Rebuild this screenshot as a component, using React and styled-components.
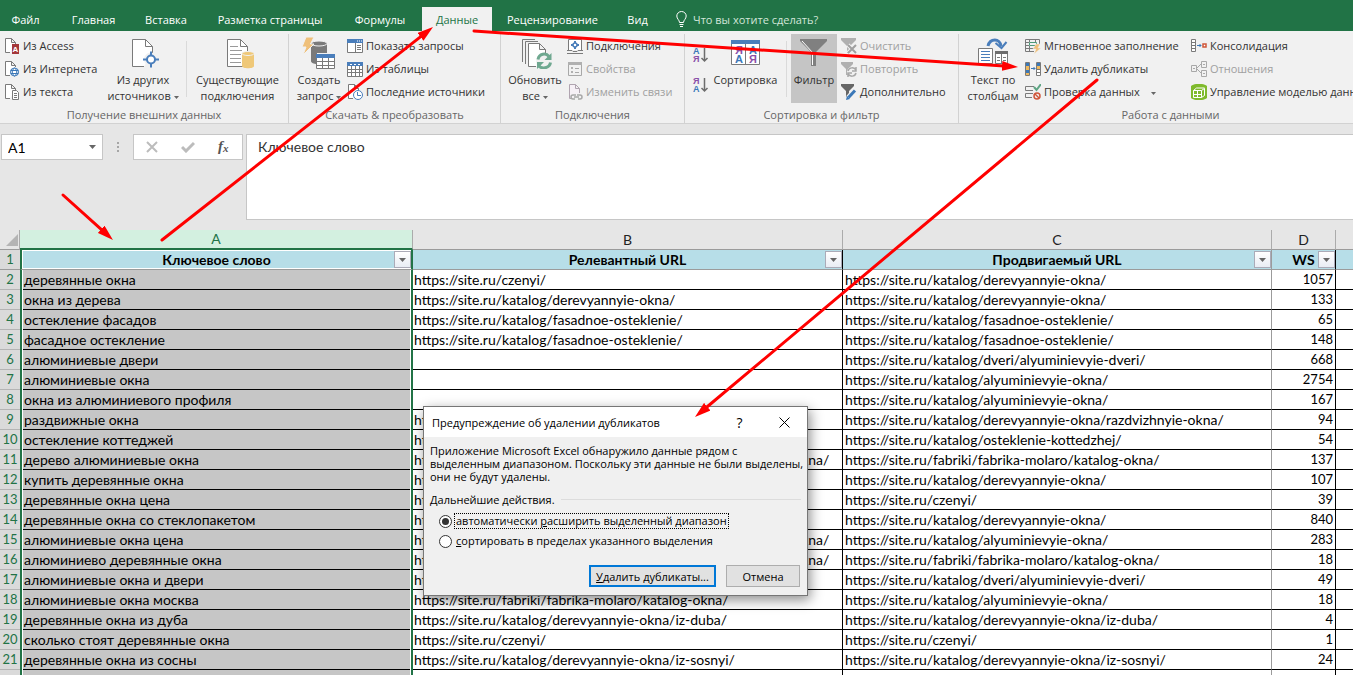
import React, { useState } from "react";
import styled, { createGlobalStyle } from "styled-components";

const GlobalStyle = createGlobalStyle`
    * {
        box-sizing: border-box;
    }

    body {
        margin: 0;
        background: #e6e6e6;
        font-family: "Open Sans", "Noto Sans", sans-serif;
        font-size: 11px;
        color: #333;
    }

    button, input, textarea {
        font: inherit;
        color: inherit;
        border-radius: 0;
        margin: 0;
        padding: 0;
    }
`;

const tabs = [
    { label: "Файл", width: 51 },
    { label: "Главная", width: 73 },
    { label: "Вставка", width: 72 },
    { label: "Разметка страницы", width: 136 },
    { label: "Формулы", width: 84 },
    { label: "Данные", width: 70 },
    { label: "Рецензирование", width: 121 },
    { label: "Вид", width: 49 },
];

const base = "https://site.ru/";
const derev = base + "katalog/derevyannyie-okna/";
const alum = base + "katalog/alyuminievyie-okna/";
const fasad = base + "katalog/fasadnoe-osteklenie/";
const dveri = base + "katalog/dveri/alyuminievyie-dveri/";
const molaro = base + "fabriki/fabrika-molaro/katalog-okna/";
const derevAlum = derev + "derevo-alyuminiev-okna/";

const rows = [
    ["деревянные окна", base + "czenyi/", derev, 1057],
    ["окна из дерева", derev, derev, 133],
    ["остекление фасадов", fasad, fasad, 65],
    ["фасадное остекление", fasad, fasad, 148],
    ["алюминиевые двери", "", dveri, 668],
    ["алюминиевые окна", "", alum, 2754],
    ["окна из алюминиевого профиля", "", alum, 167],
    ["раздвижные окна", derev, derev + "razdvizhnyie-okna/", 94],
    ["остекление коттеджей", derev, base + "katalog/osteklenie-kottedzhej/", 54],
    ["дерево алюминиевые окна", derevAlum, molaro, 137],
    ["купить деревянные окна", derev, derev, 107],
    ["деревянные окна цена", base + "czenyi/", base + "czenyi/", 39],
    ["деревянные окна со стеклопакетом", derev, derev, 840],
    ["алюминиевые окна цена", derevAlum, alum, 283],
    ["алюминиево деревянные окна", derevAlum, molaro, 18],
    ["алюминиевые окна и двери", alum, dveri, 49],
    ["алюминиевые окна москва", molaro, alum, 18],
    ["деревянные окна из дуба", derev + "iz-duba/", derev + "iz-duba/", 4],
    ["сколько стоят деревянные окна", base + "czenyi/", base + "czenyi/", 1],
    ["деревянные окна из сосны", derev + "iz-sosnyi/", derev + "iz-sosnyi/", 24],
    ["", "", "", ""],
];

/* ---------- layout ---------- */

const Window = styled.div`
    position: relative;
    display: flex;
    flex-direction: column;
    height: 100vh;
    overflow: hidden;
`;

const TabBar = styled.nav`
    display: flex;
    align-items: flex-end;
    flex: none;
    height: 31px;
    background: #217346;
    color: #fff;
`;

const Tab = styled.button`
    flex: none;
    width: ${(props) => props.$width}px;
    height: 24px;
    border: 0;
    white-space: nowrap;
    background: ${(props) => (props.$active ? "#f1f1f1" : "transparent")};
    color: ${(props) => (props.$active ? "#217346" : "#fff")};
    text-align: center;

    &:first-child {
        margin-right: 6px;
    }
`;

const TellMe = styled.button`
    display: flex;
    align-items: center;
    gap: 6px;
    height: 24px;
    padding-left: 14px;
    border: 0;
    background: transparent;
    color: #d3e6da;
    white-space: nowrap;
`;

const Ribbon = styled.div`
    display: flex;
    flex: none;
    padding-top: 3px;
    background: #f1f1f1;
    border-bottom: 1px solid #d2d2d2;
    overflow: hidden;
`;

const Group = styled.section`
    position: relative;
    flex: none;
    width: ${(props) => props.$width}px;
    padding-left: ${(props) => props.$pad || 0}px;
    border-right: 1px solid #d2d2d2;
`;

const GroupBody = styled.div`
    display: flex;
    height: 70px;
`;

const GroupLabel = styled.div`
    height: 19px;
    line-height: 21px;
    margin-left: -${(props) => props.$pad || 0}px;
    text-align: center;
    color: #666;
`;

const SmallColumn = styled.div`
    flex: none;
    width: ${(props) => props.$width}px;
    padding-left: ${(props) => props.$pad || 0}px;
`;

const SmallButton = styled.button`
    display: flex;
    align-items: center;
    gap: 3px;
    height: 23px;
    border: 0;
    background: transparent;
    white-space: nowrap;
    color: ${(props) => (props.disabled ? "#a0a0a0" : "inherit")};

    svg {
        flex: none;
    }
`;

const BigButton = styled.button`
    display: flex;
    flex: none;
    flex-direction: column;
    align-items: center;
    width: ${(props) => props.$width}px;
    height: 69px;
    padding-top: 3px;
    border: 0;
    line-height: 16px;
    white-space: nowrap;
    background: ${(props) => (props.$active ? "#c5c5c5" : "transparent")};

    svg.big {
        flex: none;
        margin-bottom: 3px;
    }
`;

const Divider = styled.div`
    flex: none;
    width: 1px;
    height: 56px;
    margin: 7px ${(props) => props.$gap || 0}px 0;
    background: #dadada;
`;

const SortColumn = styled.div`
    display: flex;
    flex: none;
    flex-direction: column;
    gap: 12px;
    width: 20px;
    padding: 11px 0 0 4px;
`;

const IconButton = styled.button`
    display: flex;
    align-items: center;
    justify-content: center;
    border: 0;
    background: transparent;
`;

const FormulaArea = styled.div`
    display: flex;
    flex: none;
    align-items: flex-start;
    padding: 10px 0 10px 1px;
    font-family: Lato, sans-serif;
    font-size: 14px;
`;

const NameBox = styled.div`
    display: flex;
    width: 102px;
    height: 26px;
    border: 1px solid #c6c6c6;
    background: #fff;
    color: #000;

    input {
        flex: 1;
        min-width: 0;
        padding-left: 6px;
        border: 0;
        outline: 0;
        background: transparent;
    }

    button {
        width: 20px;
    }
`;

const Grip = styled.div`
    display: flex;
    flex-direction: column;
    align-items: center;
    gap: 2px;
    width: 30px;
    padding-top: 8px;

    i {
        width: 2px;
        height: 2px;
        background: #a6a6a6;
    }
`;

const FormulaButtons = styled.div`
    display: flex;
    width: 110px;
    height: 26px;
    margin-right: 3px;
    border: 1px solid #c6c6c6;
    background: #fff;

    button {
        flex: 1;
    }
`;

const FormulaInput = styled.textarea`
    flex: 1;
    min-width: 0;
    height: 86px;
    padding: 2px 11px;
    border: 1px solid #c6c6c6;
    border-right: 0;
    outline: 0;
    resize: none;
    line-height: 20px;
    background: #fff;
`;

const SheetArea = styled.div`
    flex: 1;
    min-height: 0;
    overflow: hidden;
    background: #fff;
`;

const Sheet = styled.table`
    width: 100%;
    table-layout: fixed;
    border-spacing: 0;
    font-family: Lato, sans-serif;
    font-size: 14px;
    color: #000;

    td, th {
        height: 20px;
        padding: 0;
        line-height: 19px;
        white-space: nowrap;
        overflow: hidden;
    }

    thead th {
        line-height: 18px;
    }
`;

const ColumnHead = styled.th`
    font-weight: 400;
    background: ${(props) => (props.$selected ? "#d3f0e0" : "#e6e6e6")};
    color: ${(props) => (props.$selected ? "#217346" : "#222")};
    border-right: 1px solid #ababab;
    border-bottom: ${(props) => (props.$selected ? "2px solid #217346" : "1px solid #9b9b9b")};

    &:last-child {
        border-right: 0;
    }
`;

const Corner = styled.th`
    background: #e6e6e6;
    border-right: 1px solid #ababab;
    border-bottom: 1px solid #9b9b9b;

    svg {
        display: block;
        margin-left: 6px;
    }
`;

const RowHead = styled.th`
    font-weight: 400;
    font-size: 13px;
    text-align: center;
    color: #217346;
    background: #dadada;
    border-bottom: 1px solid ${(props) => (props.$first ? "#9b9b9b" : "#b4b4b4")};
`;

const lineColor = { left: "#000", center: "#9b9b9b", right: "#000" };

const Cell = styled.td`
    && {
        padding: 0 2px 0 ${(props) => (props.$tight ? 1 : 2)}px;
    }

    font-size: ${(props) => (props.$number ? 13 : 14)}px;
    text-align: ${(props) => (props.$number ? "right" : "left")};
    border-bottom: 1px solid #000;
    border-right: 1px solid ${(props) => lineColor[props.$line || "left"]};

    &:last-child {
        border-right: 0;
    }
`;

const SelectedCell = styled.td`
    background: #fff;
    border-left: 2px solid #217346;
    border-right: 2px solid #217346;

    div {
        height: 20px;
        margin: 0 1px;
        padding-left: 1px;
        background: #c6c6c6;
        border-bottom: 1px solid #000;
    }
`;

const TitleCell = styled.th`
    position: relative;
    font-weight: 700;
    background: #b7dee8;
    border-bottom: 1px solid #9b9b9b;
    border-left: ${(props) => (props.$selected ? "2px solid #217346" : "0")};
    border-right: ${(props) =>
        props.$selected ? "2px solid #217346" : `1px solid ${lineColor[props.$line || "left"]}`};
    box-shadow: ${(props) => (props.$selected ? "inset 0 0 0 1px #fff" : "none")};

    &:last-child {
        border-right: 0;
    }
`;

const FilterButton = styled.button`
    position: absolute;
    right: 0;
    bottom: 1px;
    display: flex;
    align-items: center;
    justify-content: center;
    width: 17px;
    height: 17px;
    border: 1px solid #ababb8;
    background: linear-gradient(#fff, #e9edf4);
`;

/* ---------- dialog ---------- */

const Dialog = styled.div`
    position: absolute;
    left: 423px;
    top: 406px;
    width: 385px;
    height: 190px;
    border: 1px solid #767676;
    background: #f0f0f0;
    color: #000;
    font-size: 11px;
    box-shadow: 2px 4px 12px rgba(0, 0, 0, 0.45);
`;

const DialogTitle = styled.div`
    display: flex;
    align-items: center;
    height: 30px;
    padding-left: 8px;
    background: #fff;

    h1 {
        flex: 1;
        margin: 0;
        font-size: 11px;
        font-weight: 400;
        white-space: nowrap;
    }

    button {
        width: 45px;
        height: 28px;
        font-size: 14px;
    }
`;

const DialogBody = styled.div`
    padding: 7px 6px 0;

    p {
        margin: 0;
        line-height: 13px;
        white-space: nowrap;
    }
`;

const Options = styled.fieldset`
    margin: 0;
    padding: 0;
    border: 0;
`;

const OptionsTitle = styled.div`
    display: flex;
    align-items: center;
    gap: 6px;
    height: 23px;
    margin-top: 5px;

    &::after {
        content: "";
        flex: 1;
        height: 1px;
        background: #dcdcdc;
    }
`;

const Option = styled.label`
    display: flex;
    align-items: center;
    height: 20px;
    padding-left: 9px;
    gap: 2px;
    white-space: nowrap;

    input {
        appearance: none;
        display: grid;
        place-items: center;
        width: 13px;
        height: 13px;
        border: 1px solid #333;
        border-radius: 50%;
        background: #fff;
    }

    input:checked::before {
        content: "";
        width: 7px;
        height: 7px;
        border-radius: 50%;
        background: #333;
    }

    span {
        padding: 0 1px;
        line-height: 14px;
        border: 1px dotted ${(props) => (props.$focused ? "#000" : "transparent")};
    }
`;

const DialogButtons = styled.div`
    display: flex;
    justify-content: flex-end;
    gap: 10px;
    padding: 14px 1px 0 0;
`;

const DialogButton = styled.button`
    width: ${(props) => (props.$primary ? 127 : 74)}px;
    height: 22px;
    border: ${(props) => (props.$primary ? "2px solid #0078d7" : "1px solid #adadad")};
    background: #e1e1e1;
    white-space: nowrap;
`;

const Arrows = styled.svg`
    position: absolute;
    left: 0;
    top: 0;
    pointer-events: none;
`;

/* ---------- icons ---------- */

const Small = ({ children }) => (
    <svg width="16" height="16" viewBox="0 0 16 16" fill="none" stroke="#7a7a7a">
        {children}
    </svg>
);

const Big = ({ children }) => (
    <svg className="big" width="34" height="32" viewBox="0 0 34 32" fill="none" stroke="#7a7a7a">
        {children}
    </svg>
);

const CaretShape = styled.svg`
    vertical-align: middle;
`;

const Caret = ({ small }) => (
    <CaretShape width={small ? 5 : 7} height={small ? 3 : 4} viewBox="0 0 7 4" fill="#666">
        <path d="M0 0h7L3.500 4z" />
    </CaretShape>
);

const Glyph = ({ x, y, size = 9, color, children }) => (
    <text
        x={x}
        y={y}
        fontSize={size}
        fontWeight="700"
        fill={color}
        stroke="none"
        fontFamily="Liberation Sans, sans-serif"
    >
        {children}
    </text>
);

const SmallPage = () => <path d="M6 14.500H1.500V.5h6l4 4V6M7.500.5v4h4" fill="#fff" />;

const AccessIcon = () => (
    <Small>
        <SmallPage />
        <path d="M8 6h7v10H8z" fill="#a4373a" stroke="none" />
        <Glyph x="8.500" y="14" size="8" color="#fff">A</Glyph>
    </Small>
);

const WebIcon = () => (
    <Small>
        <SmallPage />
        <circle cx="10.500" cy="11" r="4" fill="#fff" stroke="#3b78b8" />
        <path d="M6.500 9.500h8M6.500 12.500h8M10.500 7c-3 2-3 6 0 8M10.500 7c3 2 3 6 0 8" stroke="#3b78b8" />
    </Small>
);

const TextIcon = () => (
    <Small>
        <SmallPage />
        <path d="M8.500 6.500h4l2 2v7h-6z" fill="#fff" />
        <path d="M10 9.500h3M10 11.500h3M10 13.500h3" />
    </Small>
);

const OtherSourcesIcon = () => (
    <Big>
        <path d="M26.500 16V9.500l-7-7h-13v27H18M19.500 2.500v7h7" fill="#fff" />
        <circle cx="25" cy="22.500" r="5.500" fill="#f1f1f1" stroke="#f1f1f1" strokeWidth="3" />
        <circle cx="25" cy="22.500" r="4" fill="#fff" stroke="#4a7ebb" strokeWidth="2" />
        <path d="M25 14.500v4M25 26.500v4M17 22.500h4M29 22.500h4" stroke="#4a7ebb" strokeWidth="2" />
    </Big>
);

const ConnectionsIcon = () => (
    <Big>
        <path d="M6.500 2.500h13l7 7v20h-20z" fill="#fff" />
        <path d="M19.500 2.500v7h7" />
        <path d="M9 9.500h8M9 13.500h12M9 17.500h11M9 21.500h11M9 25.500h11" stroke="#9a9a9a" />
        <path d="M21 16v13c0 3 12 3 12 0V16z" fill="#efc878" stroke="none" />
        <ellipse cx="27" cy="16.500" rx="6" ry="2" fill="#efc878" stroke="#f1f1f1" />
    </Big>
);

const QueryIcon = () => (
    <Big>
        <path d="M9 7v17c0 2 3 3 6 3V16h10V7z" fill="#7a7a7a" stroke="none" />
        <ellipse cx="17" cy="6.500" rx="8" ry="2.500" fill="#7a7a7a" stroke="#f1f1f1" />
        <path d="M4 0h8L8.500 7H12L1 18l3-8H0z" fill="#efc07a" stroke="#f1f1f1" />
        <path d="M14.500 17.500h18v14h-18z" fill="#fff" />
        <path d="M14 17h19v4H14z" fill="#4a7ebb" stroke="none" />
        <path d="M14 24.500h19M14 28.500h19M20.500 21v11M26.500 21v11" />
    </Big>
);

const ShowQueriesIcon = () => (
    <Small>
        <path d="M.5 1.500h15v13H.5z" fill="#fff" />
        <path d="M0 1h16v4H0z" fill="#4a7ebb" stroke="none" />
        <path d="M8.500 5v9M10 7.500h4M10 9.500h4M10 11.500h4" />
        <path d="M10 3h1M12 3h1M14 3h1" stroke="#fff" />
    </Small>
);

const FromTableIcon = () => (
    <Small>
        <path d="M.5 1.500h15v14H.5z" fill="#fff" />
        <path d="M0 8.500h16M0 11.500h16M4.500 4v11M8.500 4v11M12.500 4v11" />
        <path d="M0 1h16v4H0z" fill="#4a7ebb" stroke="none" />
        <path d="M3 3.500h2M7 3.500h2M11 3.500h2" stroke="#fff" />
    </Small>
);

const RecentIcon = () => (
    <Small>
        <SmallPage />
        <circle cx="11" cy="11" r="4.500" fill="#fff" stroke="#4a7ebb" />
        <path d="M10.500 8v3.500H14" stroke="#4a7ebb" />
    </Small>
);

const RefreshIcon = () => (
    <Big>
        <path d="M4.500 25V2.500H17M7.500 27V4.500H20" />
        <path d="M18 29.500h-7.500v-23h11l6 6V17M21.500 6.500v6h6" fill="#fff" />
        <circle cx="26" cy="24.500" r="8" fill="#f1f1f1" stroke="none" />
        <path d="M20 22.500c1-6 8-7 11-3M32.500 25.500c-1 6-9 7-12 3" stroke="#6fa890" strokeWidth="3" />
        <path d="M33.500 16v7h-7zM19 32v-7h7z" fill="#6fa890" stroke="none" />
    </Big>
);

const LinksIcon = () => (
    <Small>
        <path d="M1.500 12V1.500h13V12" fill="#fff" />
        <path d="M0 12.500h5l1 1h4l1-1h5M0 15.500h16" />
        <path d="M8 3v2M8 9v2M4 7h2M10 7h2" stroke="#4a7ebb" strokeWidth="2" />
        <circle cx="8" cy="7" r="2" fill="#fff" stroke="#4a7ebb" strokeWidth="1.500" />
    </Small>
);

const PropertiesIcon = () => (
    <Small>
        <path d="M1.500 1.500h13v13h-13z" stroke="#a8a8a8" />
        <path d="M1 1h14v3H1zM4 6h2v2H4zM4 10h2v2H4z" fill="#b0b0b0" stroke="none" />
        <path d="M8 7.500h4M8 11.500h4" stroke="#a8a8a8" />
    </Small>
);

const EditLinksIcon = () => (
    <Small>
        <path d="M5 14.500H2.500V.5h6l4 4V9M8.500.5v4h4" stroke="#b0a4b0" fill="#f6f0f6" />
        <path d="M9 11H6a2 2 0 0 0 0 4h2M10 11h3a2 2 0 0 1 0 4h-2M7 13h5" stroke="#a8a8a8" strokeWidth="1.500" />
    </Small>
);

const SortIcon = ({ down }) => (
    <svg width="16" height="18" viewBox="0 0 16 18" fill="none" stroke="#6d6d6d">
        <Glyph x="0" y="9" color={down ? "#8a4fa8" : "#3b78b8"}>{down ? "Я" : "А"}</Glyph>
        <Glyph x="0" y="17" color={down ? "#3b78b8" : "#8a4fa8"}>{down ? "А" : "Я"}</Glyph>
        <path d="M11.500 3v13M8.500 13l3 3 3-3" strokeWidth="1.500" />
    </svg>
);

const SortDialogIcon = () => (
    <Big>
        <path d="M2.500 3.500h28v24h-28z" fill="#fff" />
        <path d="M2 3h29v4H2z" fill="#4a7ebb" stroke="none" />
        <path d="M16.500 7v20" />
        <Glyph x="6" y="17" size="11" color="#8a4fa8">Я</Glyph>
        <Glyph x="6" y="26" size="11" color="#3b78b8">А</Glyph>
        <Glyph x="20" y="17" size="11" color="#3b78b8">А</Glyph>
        <Glyph x="20" y="26" size="11" color="#8a4fa8">Я</Glyph>
    </Big>
);

const FilterIcon = () => (
    <Big>
        <path d="M3 2h27v2L19 15v14h-5V15L3 4z" fill="#808080" stroke="none" />
        <path d="M5 4l10.500 11.500V28" stroke="#fff" />
    </Big>
);

const ClearIcon = () => (
    <Small>
        <path d="M0 0h15v2L9 8v7H6V8L0 2z" fill="#b0b0b0" stroke="none" />
        <path d="M7 7l8 8M15 7l-8 8" stroke="#f1f1f1" strokeWidth="4" />
        <path d="M7 7l8 8M15 7l-8 8" stroke="#a0a0a0" strokeWidth="2" />
    </Small>
);

const ReapplyIcon = () => (
    <Small>
        <path d="M0 1h12v2L7 8v6H5V8L0 3z" fill="#b0b0b0" stroke="none" />
        <circle cx="11" cy="11" r="5" fill="#f1f1f1" stroke="none" />
        <path d="M7 10c1-4 6-4 8-1M15 6v4h-4M15 12c-1 4-6 4-8 1M7 16v-4h4" stroke="#a8a8a8" strokeWidth="1.500" />
    </Small>
);

const AdvancedIcon = () => (
    <Small>
        <path d="M0 0h13v2L8 7v6H5V7L0 2z" fill="#666" stroke="none" />
        <path d="M7 14l7-8" stroke="#f1f1f1" strokeWidth="5" />
        <path d="M7.500 13.500l6.500-7" stroke="#3b78b8" strokeWidth="3" />
        <path d="M5 16l1-4 3 3z" fill="#3b78b8" stroke="none" />
    </Small>
);

const TextColumnsIcon = () => (
    <Big>
        <path d="M12 9c2-8 12-8 13 0" stroke="#4a7ebb" strokeWidth="3" />
        <path d="M19.500 6l6 5 5-6" stroke="#4a7ebb" strokeWidth="2" />
        <path d="M2.500 11.500h14v15h-14zM19.500 14.500h12v12h-12z" fill="#fff" />
        <path d="M5 14.500h9M5 17.500h9M5 20.500h9M5 23.500h9" stroke="#4a7ebb" />
        <path d="M19 14h13v3H19z" fill="#6d6d6d" stroke="none" />
        <path d="M25.500 17v9M21 20.500h3M21 23.500h3M27 20.500h3M27 23.500h3" />
    </Big>
);

const FlashFillIcon = () => (
    <Small>
        <path d="M9 13.500H.5v-12h14V6M0 4.500h4M0 7.500h4M0 10.500h9M4.500 1v3M10.500 1v3M4.500 8v5" />
        <path d="M4.500 4.500h7v3h-7z" stroke="#4f9a78" />
        <path d="M11 6h4l-2 4h3l-7 6 2-5H8z" fill="#efc07a" stroke="#f1f1f1" strokeWidth=".5" />
    </Small>
);

const DuplicatesIcon = () => (
    <Small>
        <path d="M.5 1.500h4v13h-4zM11.500 1.500h4v13h-4z" fill="#fff" />
        <path d="M1 2h3v3H1zM1 9h3v3H1zM12 2h3v3h-3z" fill="#3b78b8" stroke="none" />
        <path d="M1 5h3v4H1zM1 12h3v2H1zM12 5h3v3h-3z" fill="#efb95e" stroke="none" />
        <path d="M12 8.500h3M12 11.500h3" />
        <path d="M6 7.500h4M8.500 6L10 7.500 8.500 9" stroke="#3b78b8" />
    </Small>
);

const ValidationIcon = () => (
    <Small>
        <path d="M8 6.500H.5v-4H9M7 13.500H.5v-4H8" />
        <path d="M9 3l2.500 3L16 0" stroke="#5fa584" strokeWidth="2" />
        <circle cx="12" cy="12" r="3" stroke="#d0573a" strokeWidth="1.500" />
        <path d="M10 10l4 4" stroke="#d0573a" strokeWidth="1.500" />
    </Small>
);

const ConsolidateIcon = () => (
    <Small>
        <path d="M.5 1.500h4v12h-4zM0 4.500h5M0 7.500h5M0 10.500h5" fill="#fff" />
        <path d="M6 7.500h4M8.500 6L10 7.500 8.500 9" stroke="#3b78b8" />
        <path d="M12 6h3v3h-3z" fill="#fff" stroke="#d0573a" strokeWidth="1.500" />
    </Small>
);

const RelationsIcon = () => (
    <Small>
        <path d="M.5 4.500h5v6h-5zM10.500.5h5v6h-5zM10.500 9.500h5v6h-5zM6 7l4-4M6 8l4 4" stroke="#a8a8a8" />
        <path d="M2 7.500h2M12 3.500h2M12 12.500h2" stroke="#a8a8a8" />
    </Small>
);

const DataModelIcon = () => (
    <Small>
        <path d="M0 2c4-3 12-3 16 0v12c-4 3-12 3-16 0z" fill="#7fba2c" stroke="none" />
        <path d="M2.500 6.500h8v7h-8zM10.500 6.500l3-2v7l-3 2M2.500 6.500l3-2.500h8M6.500 7v6M3 10.500h7" stroke="#fff" />
    </Small>
);

/* ---------- parts ---------- */

const Tool = ({ icon, label, disabled, caret }) => (
    <SmallButton disabled={disabled}>
        {icon}
        <span>
            {label}
            {caret && <>&nbsp;&nbsp;&nbsp;&nbsp;<Caret small /></>}
        </span>
    </SmallButton>
);

const BigTool = ({ icon, lines, width, active, caret }) => (
    <BigButton $width={width} $active={active}>
        {icon}
        <span>{lines[0]}</span>
        {lines[1] && (
            <span>
                {lines[1]} {caret && <Caret small />}
            </span>
        )}
    </BigButton>
);

const DataRibbon = () => (
    <Ribbon>
        <Group $width={289} $pad={4}>
            <GroupBody>
                <SmallColumn $width={96}>
                    <Tool icon={<AccessIcon />} label="Из Access" />
                    <Tool icon={<WebIcon />} label="Из Интернета" />
                    <Tool icon={<TextIcon />} label="Из текста" />
                </SmallColumn>
                <BigTool icon={<OtherSourcesIcon />} lines={["Из других", "источников"]} width={86} caret />
                <Divider />
                <BigTool icon={<ConnectionsIcon />} lines={["Существующие", "подключения"]} width={101} />
            </GroupBody>
            <GroupLabel $pad={4}>Получение внешних данных</GroupLabel>
        </Group>
        <Group $width={212} $pad={2}>
            <GroupBody>
                <BigTool icon={<QueryIcon />} lines={["Создать", "запрос"]} width={56} caret />
                <SmallColumn $width={150}>
                    <Tool icon={<ShowQueriesIcon />} label="Показать запросы" />
                    <Tool icon={<FromTableIcon />} label="Из таблицы" />
                    <Tool icon={<RecentIcon />} label="Последние источники" />
                </SmallColumn>
            </GroupBody>
            <GroupLabel $pad={2}>Скачать &amp; преобразовать</GroupLabel>
        </Group>
        <Group $width={184} $pad={2}>
            <GroupBody>
                <BigTool icon={<RefreshIcon />} lines={["Обновить", "все"]} width={64} caret />
                <SmallColumn $width={110}>
                    <Tool icon={<LinksIcon />} label="Подключения" />
                    <Tool icon={<PropertiesIcon />} label="Свойства" disabled />
                    <Tool icon={<EditLinksIcon />} label="Изменить связи" disabled />
                </SmallColumn>
            </GroupBody>
            <GroupLabel $pad={2}>Подключения</GroupLabel>
        </Group>
        <Group $width={274} $pad={4}>
            <GroupBody>
                <SortColumn>
                    <IconButton aria-label="Сортировка от А до Я"><SortIcon /></IconButton>
                    <IconButton aria-label="Сортировка от Я до А"><SortIcon down /></IconButton>
                </SortColumn>
                <BigTool icon={<SortDialogIcon />} lines={["Сортировка"]} width={73} />
                <Divider $gap={4} />
                <BigTool icon={<FilterIcon />} lines={["Фильтр"]} width={46} active />
                <SmallColumn $width={118} $pad={4}>
                    <Tool icon={<ClearIcon />} label="Очистить" disabled />
                    <Tool icon={<ReapplyIcon />} label="Повторить" disabled />
                    <Tool icon={<AdvancedIcon />} label="Дополнительно" />
                </SmallColumn>
            </GroupBody>
            <GroupLabel $pad={4}>Сортировка и фильтр</GroupLabel>
        </Group>
        <Group $width={424} $pad={2}>
            <GroupBody>
                <BigTool icon={<TextColumnsIcon />} lines={["Текст по", "столбцам"]} width={64} />
                <SmallColumn $width={166}>
                    <Tool icon={<FlashFillIcon />} label="Мгновенное заполнение" />
                    <Tool icon={<DuplicatesIcon />} label="Удалить дубликаты" />
                    <Tool icon={<ValidationIcon />} label="Проверка данных" caret />
                </SmallColumn>
                <SmallColumn $width={190}>
                    <Tool icon={<ConsolidateIcon />} label="Консолидация" />
                    <Tool icon={<RelationsIcon />} label="Отношения" disabled />
                    <Tool icon={<DataModelIcon />} label="Управление моделью данных" />
                </SmallColumn>
            </GroupBody>
            <GroupLabel $pad={2}>Работа с данными</GroupLabel>
        </Group>
    </Ribbon>
);

const FormulaBar = () => (
    <FormulaArea>
        <NameBox>
            <input aria-label="Имя" defaultValue="A1" />
            <IconButton aria-label="Список имён"><Caret /></IconButton>
        </NameBox>
        <Grip><i /><i /><i /></Grip>
        <FormulaButtons>
            <IconButton aria-label="Отмена ввода">
                <svg width="12" height="12" viewBox="0 0 12 12" stroke="#bcbcbc" strokeWidth="2">
                    <path d="M1 1l10 10M11 1L1 11" />
                </svg>
            </IconButton>
            <IconButton aria-label="Ввод">
                <svg width="14" height="12" viewBox="0 0 14 12" fill="none" stroke="#bcbcbc" strokeWidth="3">
                    <path d="M1 6l4 4 8-8" />
                </svg>
            </IconButton>
            <IconButton aria-label="Вставить функцию">
                <svg width="16" height="18" viewBox="0 0 16 18" fill="#555" fontFamily="Liberation Serif, serif" fontStyle="italic" fontWeight="700">
                    <text x="2" y="13" fontSize="15">f</text>
                    <text x="7" y="14" fontSize="11">x</text>
                </svg>
            </IconButton>
        </FormulaButtons>
        <FormulaInput aria-label="Строка формул" defaultValue="Ключевое слово" />
    </FormulaArea>
);

const Title = ({ label, selected, line }) => (
    <TitleCell $selected={selected} $line={line}>
        {label}
        <FilterButton aria-label={"Фильтр: " + label}><Caret /></FilterButton>
    </TitleCell>
);

const DataSheet = () => (
    <SheetArea>
        <Sheet>
            <colgroup>
                <col width="20" />
                <col width="393" />
                <col width="430" />
                <col width="429" />
                <col width="64" />
                <col />
            </colgroup>
            <thead>
                <tr>
                    <Corner aria-label="Выделить все">
                        <svg width="12" height="12" viewBox="0 0 12 12" fill="#b4b4b4">
                            <path d="M12 0v12H0z" />
                        </svg>
                    </Corner>
                    <ColumnHead $selected>A</ColumnHead>
                    <ColumnHead>B</ColumnHead>
                    <ColumnHead>C</ColumnHead>
                    <ColumnHead>D</ColumnHead>
                    <ColumnHead />
                </tr>
            </thead>
            <tbody>
                <tr>
                    <RowHead $first>1</RowHead>
                    <Title label="Ключевое слово" selected />
                    <Title label="Релевантный URL" />
                    <Title label="Продвигаемый URL" line="center" />
                    <Title label="WS" />
                    <TitleCell />
                </tr>
                {rows.map(([keyword, relevant, promoted, ws], index) => (
                    <tr key={index}>
                        <RowHead>{keyword && index + 2}</RowHead>
                        <SelectedCell><div>{keyword}</div></SelectedCell>
                        <Cell $tight>{relevant}</Cell>
                        <Cell $line="center">{promoted}</Cell>
                        <Cell $number>{ws}</Cell>
                        <Cell />
                    </tr>
                ))}
            </tbody>
        </Sheet>
    </SheetArea>
);

const DuplicatesDialog = () => {
    const [mode, setMode] = useState("expand");

    return (
        <Dialog role="dialog" aria-labelledby="dialog-title">
            <DialogTitle>
                <h1 id="dialog-title">Предупреждение об удалении дубликатов</h1>
                <IconButton aria-label="Справка">?</IconButton>
                <IconButton aria-label="Закрыть">
                    <svg width="11" height="11" viewBox="0 0 11 11" stroke="#000">
                        <path d="M.5.5l10 10M10.500.5l-10 10" />
                    </svg>
                </IconButton>
            </DialogTitle>
            <DialogBody>
                <p>
                    Приложение Microsoft Excel обнаружило данные рядом с<br />
                    выделенным диапазоном. Поскольку эти данные не были выделены,<br />
                    они не будут удалены.
                </p>
                <Options>
                    <OptionsTitle>Дальнейшие действия.</OptionsTitle>
                    <Option $focused>
                        <input
                            type="radio"
                            name="mode"
                            checked={mode === "expand"}
                            onChange={() => setMode("expand")}
                        />
                        <span>автоматически <u>р</u>асширить выделенный диапазон</span>
                    </Option>
                    <Option>
                        <input
                            type="radio"
                            name="mode"
                            checked={mode === "inside"}
                            onChange={() => setMode("inside")}
                        />
                        <span><u>с</u>ортировать в пределах указанного выделения</span>
                    </Option>
                </Options>
                <DialogButtons>
                    <DialogButton $primary><u>У</u>далить дубликаты...</DialogButton>
                    <DialogButton>Отмена</DialogButton>
                </DialogButtons>
            </DialogBody>
        </Dialog>
    );
};

const arrows = [
    [63, 195, 113, 240],
    [162, 240, 433, 27],
    [474, 31, 1018, 67],
    [1097, 80, 695, 417],
];

const headLength = 16;

// the line stops inside the head so that the tip stays sharp
const shaft = ([x1, y1, x2, y2]) => {
    const length = Math.hypot(x2 - x1, y2 - y1);
    const k = (length - headLength + 2) / length;
    return `M${x1} ${y1}L${x1 + (x2 - x1) * k} ${y1 + (y2 - y1) * k}`;
};

const ArrowLayer = () => (
    <Arrows width="1353" height="675" viewBox="0 0 1353 675" aria-hidden="true">
        <defs>
            <marker
                id="head"
                markerUnits="userSpaceOnUse"
                markerWidth={headLength}
                markerHeight="10"
                refX="2"
                refY="5"
                orient="auto"
            >
                <path d={`M0 0L${headLength} 5L0 10z`} fill="#f00" />
            </marker>
        </defs>
        {arrows.map((arrow) => (
            <path
                key={arrow[0]}
                d={shaft(arrow)}
                stroke="#f00"
                strokeWidth="3"
                strokeLinecap="round"
                markerEnd="url(#head)"
            />
        ))}
    </Arrows>
);

export default function App() {
    const [active, setActive] = useState("Данные");

    return (
        <Window>
            <GlobalStyle />
            <TabBar>
                {tabs.map((tab) => (
                    <Tab
                        key={tab.label}
                        $width={tab.width}
                        $active={tab.label === active}
                        onClick={() => setActive(tab.label)}
                    >
                        {tab.label}
                    </Tab>
                ))}
                <TellMe>
                    <svg width="11" height="16" viewBox="0 0 11 16" fill="none" stroke="#fff">
                        <path d="M3.500 11.500C3.500 9 .8 8 .8 5a4.700 4.500 0 0 1 9.400 0c0 3-2.700 4-2.700 6.500zM3.500 13.500h4M4 15.500h3" />
                    </svg>
                    Что вы хотите сделать?
                </TellMe>
            </TabBar>
            <DataRibbon />
            <FormulaBar />
            <DataSheet />
            <DuplicatesDialog />
            <ArrowLayer />
        </Window>
    );
}
